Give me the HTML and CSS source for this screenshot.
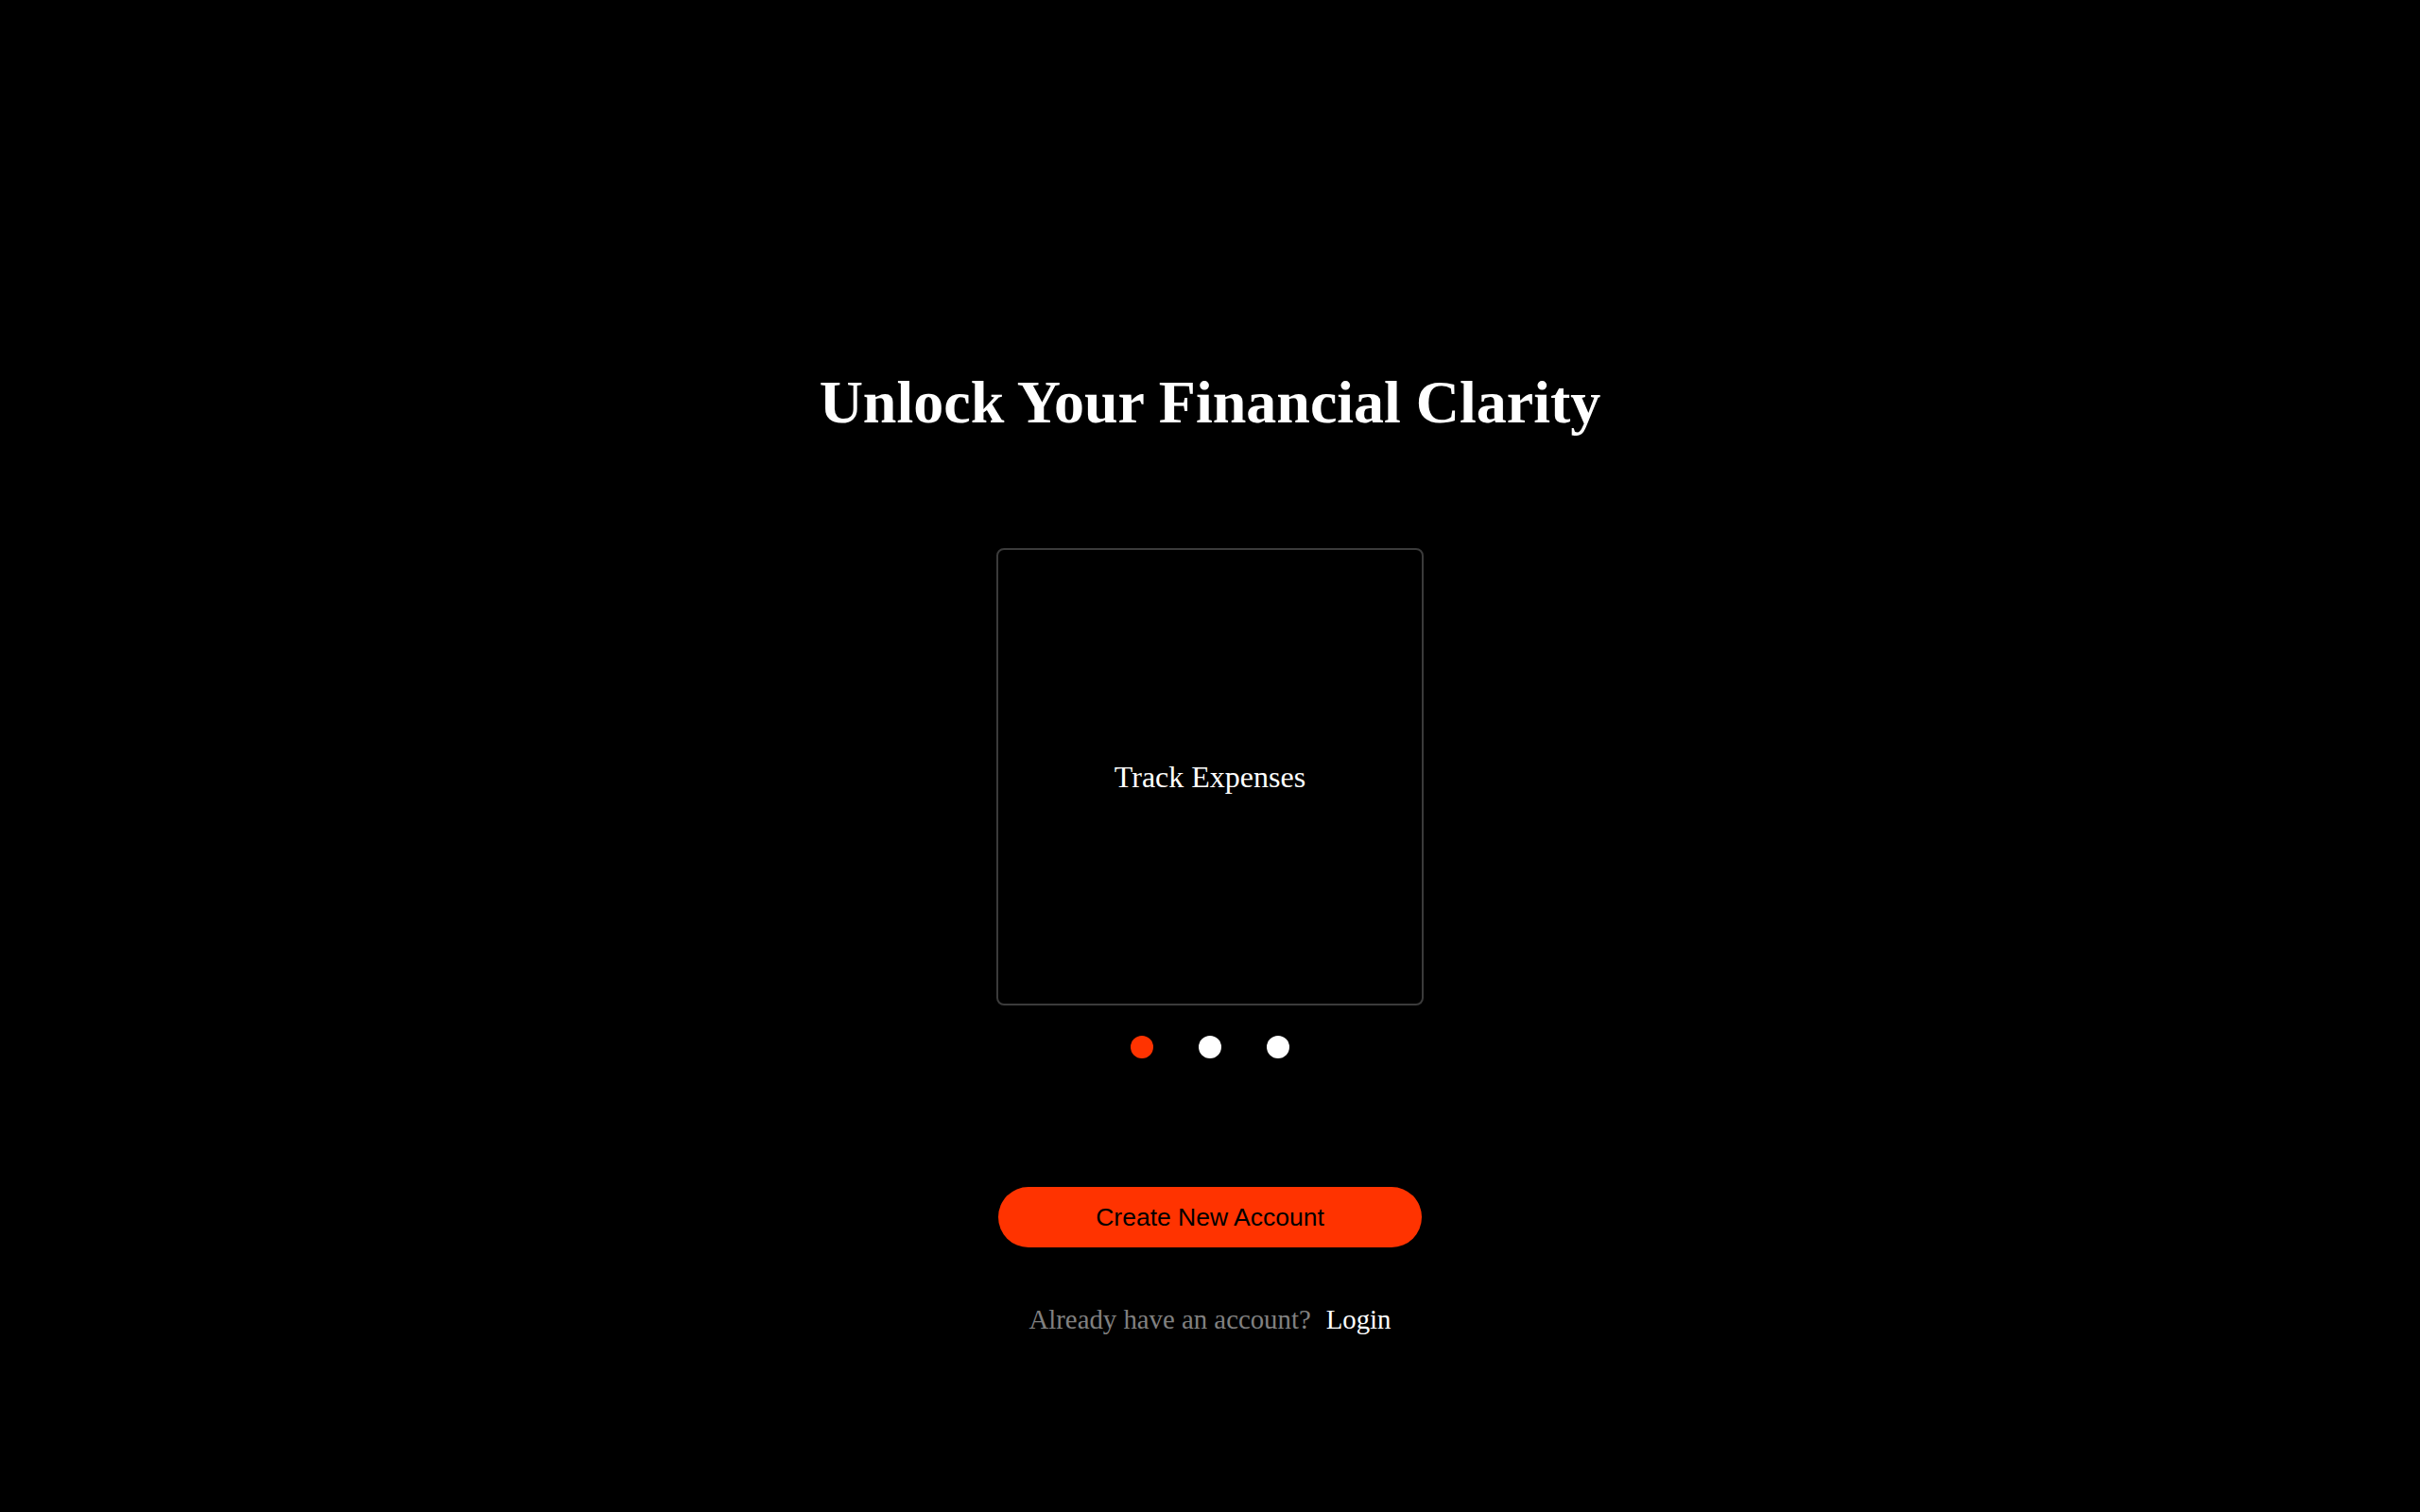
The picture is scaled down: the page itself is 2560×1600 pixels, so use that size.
FILE: index.html
```html
<!DOCTYPE html>
<html lang="en">
<head>
<meta charset="utf-8">
<title>Unlock Your Financial Clarity</title>
<link rel="stylesheet" href="styles.css">
</head>
<body>
<main class="page">
  <h1 class="title">Unlock Your Financial Clarity</h1>
  <section class="carousel">
    <div class="slide">Track Expenses</div>
    <div class="dots">
      <span class="dot active"></span>
      <span class="dot"></span>
      <span class="dot"></span>
    </div>
  </section>
  <button class="cta" type="button">Create New Account</button>
  <p class="login-row"><span class="muted">Already have an account?</span><a class="login" href="#">Login</a></p>
</main>
</body>
</html>
```

FILE: styles.css
```css
html, body {
  margin: 0;
  padding: 0;
  background: #000;
  height: 100%;
}

body {
  font-family: "Liberation Serif", "Times New Roman", serif;
  color: #fff;
}

.page {
  display: flex;
  flex-direction: column;
  align-items: center;
  padding-top: 389px;
  box-sizing: border-box;
  min-height: 100%;
}

.title {
  margin: 0;
  font-size: 64px;
  line-height: 74px;
  font-weight: 700;
  color: #fff;
}

.carousel {
  margin-top: 117px;
  display: flex;
  flex-direction: column;
  align-items: center;
}

.slide {
  box-sizing: border-box;
  width: 452px;
  height: 484px;
  border: 2px solid #3b3b3b;
  border-radius: 8px;
  display: flex;
  align-items: center;
  justify-content: center;
  font-size: 32px;
  color: #fff;
}

.dots {
  margin-top: 32px;
  display: flex;
  gap: 48px;
}

.dot {
  width: 24px;
  height: 24px;
  border-radius: 50%;
  background: #fff;
}

.dot.active {
  background: #ff3300;
}

.cta {
  margin-top: 136px;
  width: 448px;
  height: 64px;
  border: none;
  border-radius: 32px;
  background: #ff3300;
  color: #000;
  font-family: "Liberation Sans", Arial, sans-serif;
  font-size: 26.5px;
  padding: 0;
}

.login-row {
  margin: 60px 0 0;
  font-size: 28.8px;
  line-height: 32px;
}

.muted {
  color: #808080;
}

.login {
  margin-left: 16px;
  color: #fff;
  text-decoration: none;
}
```
